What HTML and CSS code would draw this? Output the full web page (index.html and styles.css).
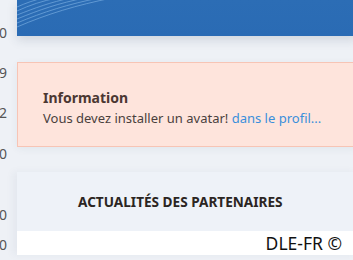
FILE: index.html
```html
<!DOCTYPE html>
<html lang="fr">
  <head>
    <meta charset="UTF-8" />
    <meta name="viewport" content="width=device-width, initial-scale=1.0" />
    <title>DLE-FR</title>
    <link rel="stylesheet" href="styles.css">
  </head>
  <body>
    <div class="ruler">
      <div class="tick tick-a"><span>20</span></div>
      <div class="tick tick-b"><span>19</span></div>
      <div class="tick tick-c"><span>12</span></div>
      <div class="tick tick-d"><span>10</span></div>
      <div class="tick tick-e"><span>10</span></div>
      <div class="tick tick-f"><span>10</span></div>
    </div>

    <div class="main">
      <div class="banner">
        <svg class="banner-lines" width="100" height="36" viewBox="0 0 100 36">
          <g fill="none" stroke="#8fc0ee" stroke-width="0.7" opacity="0.75">
            <path d="M0 27 C 30 14, 60 5, 95 -2" />
            <path d="M0 23 C 26 12, 52 4, 82 -2" />
            <path d="M0 19 C 22 10, 42 3, 68 -2" />
            <path d="M0 15 C 18 8, 34 2, 54 -2" />
            <path d="M0 11 C 13 5, 25 1, 40 -2" />
            <path d="M0 7 C 9 3, 17 0, 27 -2" />
          </g>
        </svg>
      </div>

      <div class="alert">
        <b class="alert-title">Information</b>
        <p class="alert-text">Vous devez installer un avatar! <a href="#">dans le profil...</a></p>
      </div>

      <div class="panel">
        <div class="panel-head">
          <h3>Actualités des partenaires</h3>
        </div>
        <div class="panel-body">DLE-FR &copy;</div>
      </div>
    </div>
  </body>
</html>
```

FILE: styles.css
```css
html,
body {
  margin: 0;
  height: 100%;
  overflow: hidden;
}

body {
  font-family: "Noto Sans", "Open Sans", sans-serif;
  background-color: #eef1f6;
  display: flex;
  align-items: flex-start;
}

.ruler {
  width: 17px;
  flex-shrink: 0;
  overflow: hidden;
  font-size: 14px;
  line-height: 16px;
  color: #555;
}

.tick {
  display: flex;
  justify-content: flex-end;
  padding-right: 10px;
  white-space: nowrap;
}

.tick span {
  flex-shrink: 0;
}

.tick-a { margin-top: 25px; }
.tick-b { margin-top: 24px; }
.tick-c { margin-top: 24px; }
.tick-d { margin-top: 25px; }
.tick-e { margin-top: 45px; }
.tick-f { margin-top: 14px; }

.main {
  width: 340px;
  flex-shrink: 0;
}

.banner {
  height: 36px;
  background: linear-gradient(180deg, #2c6db5 0%, #2a6bb4 100%);
  box-shadow: 0 4px 10px rgba(40, 60, 90, 0.15);
}

.banner-lines {
  display: block;
}

.alert {
  margin-top: 26px;
  height: 85px;
  box-sizing: border-box;
  padding: 25px 25px 0;
  background-color: #fee4dc;
  border: 1px solid #f7c4b5;
  border-right: none;
  color: #4a3f3c;
  box-shadow: 0 2px 8px rgba(40, 60, 90, 0.06);
}

.alert-title {
  display: block;
  font-size: 14px;
  line-height: 20px;
  color: #4b3732;
}

.alert-text {
  margin: 0;
  font-size: 13px;
  line-height: 20px;
}

.alert-text a {
  color: #3a8fdb;
  text-decoration: none;
}

.panel {
  margin-top: 25px;
  background-color: #fff;
  box-shadow: -4px 0 8px rgba(40, 60, 90, 0.05);
}

.panel-head {
  height: 59px;
  box-sizing: border-box;
  padding: 21px 0 0 61px;
  background-color: #eef2f8;
}

.panel-head h3 {
  margin: 0;
  font-size: 13.6px;
  line-height: 18px;
  font-weight: 700;
  text-transform: uppercase;
  color: #2b2522;
}

.panel-body {
  padding: 0 15px 0 0;
  text-align: right;
  font-size: 17.5px;
  line-height: 24px;
  color: #111;
}
```
